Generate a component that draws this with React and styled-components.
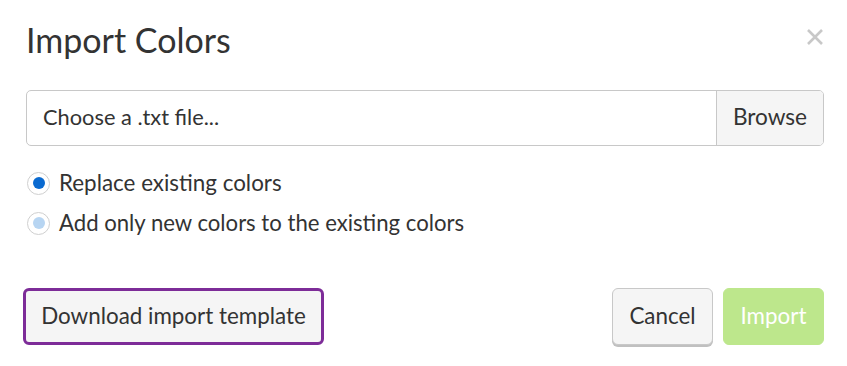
import React from "react";
import styled, { createGlobalStyle } from "styled-components";

const Global = createGlobalStyle`
  html, body { margin: 0; padding: 0; background: #fff; }
  body { font-family: Lato, "Open Sans", sans-serif; color: #333; }
  * { box-sizing: border-box; }
`;

const Dialog = styled.div`
  width: 847px;
  height: 366px;
  padding: 0 23px 0 26px;
  display: flex;
  flex-direction: column;
`;

const Header = styled.div`
  display: flex;
  justify-content: space-between;
  align-items: flex-start;
  padding-top: 18px;
`;

const Title = styled.h1`
  margin: 0;
  font-size: 34px;
  font-weight: 400;
  line-height: 44px;
  color: #333;
`;

const Close = styled.button`
  border: 0;
  background: none;
  padding: 0;
  margin-top: 10px;
  color: #c8c8c8;
  cursor: pointer;
  display: flex;
`;

const FileGroup = styled.div`
  margin-top: 28px;
  display: flex;
  height: 56px;
  border: 1px solid #c8c8c8;
  border-radius: 5px;
  overflow: hidden;
`;

const FileText = styled.div`
  flex: 1;
  display: flex;
  align-items: center;
  padding-left: 16px;
  padding-bottom: 3px;
  font-size: 21.8px;
  color: #333;
`;

const Addon = styled.div`
  width: 107px;
  display: flex;
  align-items: center;
  justify-content: center;
  padding-bottom: 3px;
  background: #f5f5f5;
  border-left: 1px solid #c8c8c8;
  font-size: 22.6px;
  color: #333;
`;

const Options = styled.div`
  margin-top: 25px;
  display: flex;
  flex-direction: column;
  gap: 16px;
`;

const Option = styled.label`
  display: flex;
  align-items: center;
  gap: 10px;
  font-size: ${(p) => p.$size || "22.4px"};
  line-height: 24px;
  color: #333;
`;

const RadioCircle = styled.span`
  width: 23px;
  height: 23px;
  border-radius: 50%;
  border: 1px solid #cfcfcf;
  background: #fff;
  display: flex;
  align-items: center;
  justify-content: center;
  margin-left: 1px;
  margin-right: -1px;
  &::after {
    content: "";
    width: 12px;
    height: 12px;
    border-radius: 50%;
    background: ${(p) => p.$color};
  }
`;

const Footer = styled.div`
  margin-top: auto;
  margin-bottom: 21px;
  display: flex;
  align-items: center;
  margin-left: -3px;
`;

const Spacer = styled.div`
  flex: 1;
`;

const Button = styled.button`
  font-family: inherit;
  font-size: 22.4px;
  height: 57px;
  width: ${(p) => p.$width};
  padding: 0 0 2px;
  border-radius: 6px;
  cursor: pointer;
  color: ${(p) => (p.$primary ? "#fff" : "#333")};
  background: ${(p) => (p.$primary ? "#bde78c" : "#f5f5f5")};
  border: ${(p) =>
    p.$focused ? "3px solid #7d2c98" : p.$primary ? "1px solid #bde78c" : "1px solid #c8c8c8"};
  box-shadow: ${(p) => (p.$raised ? "0 2px 0 #c0c0c0" : "none")};
  & + & {
    margin-left: 10px;
  }
`;

export default function App() {
  return (
    <>
      <Global />
      <Dialog>
        <Header>
          <Title>Import Colors</Title>
          <Close aria-label="Close">
            <svg width="18" height="18" viewBox="0 0 18 18">
              <path d="M2 2 L16 16 M16 2 L2 16" stroke="currentColor" strokeWidth="2.6" />
            </svg>
          </Close>
        </Header>
        <FileGroup>
          <FileText>Choose a .txt file...</FileText>
          <Addon>Browse</Addon>
        </FileGroup>
        <Options>
          <Option>
            <RadioCircle $color="#0a6ad0" />
            Replace existing colors
          </Option>
          <Option $size="22.15px">
            <RadioCircle $color="#b7d5f2" />
            Add only new colors to the existing colors
          </Option>
        </Options>
        <Footer>
          <Button $focused $width="301px">Download import template</Button>
          <Spacer />
          <Button $raised $width="101px">Cancel</Button>
          <Button $primary $width="101px">Import</Button>
        </Footer>
      </Dialog>
    </>
  );
}
